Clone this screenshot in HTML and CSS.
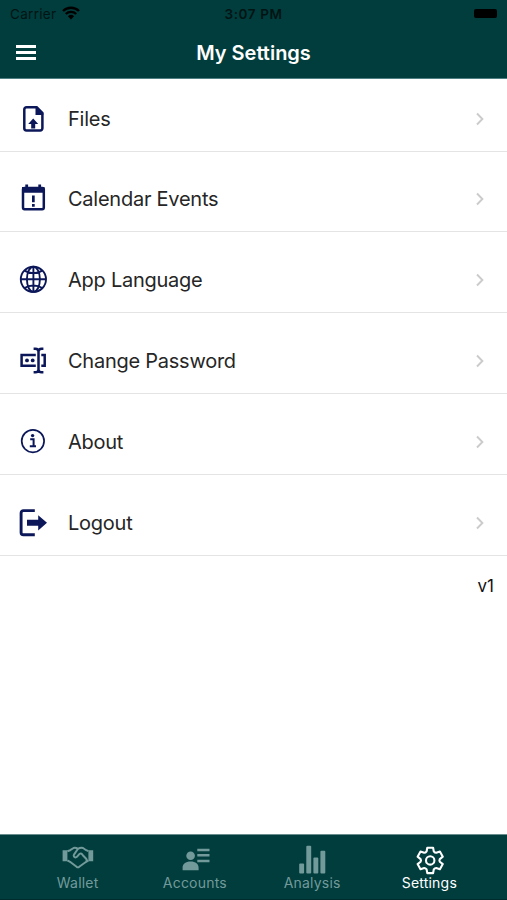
FILE: index.html
```html
<!DOCTYPE html>
<html lang="en">
<head>
    <meta charset="UTF-8">
    <meta name="viewport" content="width=device-width, initial-scale=1.0">
    <title>My Settings</title>
    <link rel="stylesheet" href="styles.css">
</head>
<body>

    <header>
        <!-- Status bar -->
        <div class="status-bar">
            <div class="carrier">
                <span>Carrier</span>
                <svg class="wifi" viewBox="0 0 18 14" width="18" height="14">
                    <path d="M1 5a11.5 11.5 0 0 1 16 0M3.8 8a7.4 7.4 0 0 1 10.4 0" fill="none" stroke="#000" stroke-width="2.4"/>
                    <path d="M5.9 10.2a4.5 4.5 0 0 1 6.2 0L9 13.5z"/>
                </svg>
            </div>
            <div class="time">3:07 PM</div>
            <div class="battery"></div>
        </div>

        <div class="nav-bar">
            <div class="menu-button">
                <span></span>
                <span></span>
                <span></span>
            </div>
            <h1>My Settings</h1>
        </div>
    </header>

    <!-- Settings list -->
    <main>
        <ul class="settings-list">
            <li class="row">
                <svg class="icon" viewBox="0 0 36 36">
                    <path d="M11.5 6.3h10.2l5.7 5.8v15.2a2.2 2.2 0 0 1-2.2 2.2H11.5a2.2 2.2 0 0 1-2.2-2.2V8.5a2.2 2.2 0 0 1 2.2-2.2z" class="line" stroke-width="2.5"/>
                    <path d="M20.5 6h1.8l6 6.2v1.8h-7.8zM18.2 17.6l5 5.4h-3v4.4h-4V23h-3z"/>
                </svg>
                <span class="label">Files</span>
                <svg class="chevron" viewBox="0 0 10 14"><path d="M2 1.5L7.4 7 2 12.5"/></svg>
            </li>
            <li class="row">
                <svg class="icon" viewBox="0 0 36 36">
                    <rect x="8" y="7" width="20.8" height="21.2" rx="1.6" class="line" stroke-width="2.5"/>
                    <path d="M7 6h22.5v5.8H7zM10.3 3.5h2.8V7h-2.8zM23.3 3.5h2.8V7h-2.8zM17 14.5h2.7v6.8H17zM17 23h2.7v2.7H17z"/>
                </svg>
                <span class="label">Calendar Events</span>
                <svg class="chevron" viewBox="0 0 10 14"><path d="M2 1.5L7.4 7 2 12.5"/></svg>
            </li>
            <li class="row">
                <svg class="icon" viewBox="0 0 36 36">
                    <g class="line" stroke-width="1.9">
                        <circle cx="18.4" cy="17.3" r="12.6"/>
                        <ellipse cx="18.4" cy="17.3" rx="6.5" ry="12.6"/>
                        <path d="M18.4 4.6V30M5.7 17.3h25.4M9.6 8.6c4.8 3.4 12.8 3.4 17.6 0M9.6 26c4.8-3.4 12.8-3.4 17.6 0"/>
                    </g>
                </svg>
                <span class="label">App Language</span>
                <svg class="chevron" viewBox="0 0 10 14"><path d="M2 1.5L7.4 7 2 12.5"/></svg>
            </li>
            <li class="row">
                <svg class="icon" viewBox="0 0 36 36">
                    <path d="M20.8 12H6.6v10.8h14.2M26.3 12h3.4v10.8h-3.4M18.6 5.7h1.8c1.8 0 3.1 1 3.1 2.8v18c0 1.8-1.3 2.8-3.1 2.8h-1.8M28.4 5.7h-1.8c-1.8 0-3.1 1-3.1 2.8v18c0 1.8 1.3 2.8 3.1 2.8h1.8" class="line" stroke-width="2.5"/>
                    <circle cx="12" cy="17.4" r="1.9"/>
                    <circle cx="17.7" cy="17.4" r="1.9"/>
                </svg>
                <span class="label">Change Password</span>
                <svg class="chevron" viewBox="0 0 10 14"><path d="M2 1.5L7.4 7 2 12.5"/></svg>
            </li>
            <li class="row">
                <svg class="icon" viewBox="0 0 36 36">
                    <circle cx="17.9" cy="17.1" r="11.2" class="line" stroke-width="1.7"/>
                    <circle cx="17.6" cy="11.6" r="1.7"/>
                    <path d="M15.2 15.2h3.4v6.7M14.8 22.2h6.2" class="line" stroke-width="2"/>
                </svg>
                <span class="label">About</span>
                <svg class="chevron" viewBox="0 0 10 14"><path d="M2 1.5L7.4 7 2 12.5"/></svg>
            </li>
            <li class="row">
                <svg class="icon" viewBox="0 0 36 36">
                    <path d="M19.8 5.6H8.4a2.3 2.3 0 0 0-2.3 2.3v19.6a2.3 2.3 0 0 0 2.3 2.3h11.4" class="line" stroke-width="2.9"/>
                    <path d="M12 14.8h11.2v-4.6L32 17.8l-8.8 7.6v-4.7H12z"/>
                </svg>
                <span class="label">Logout</span>
                <svg class="chevron" viewBox="0 0 10 14"><path d="M2 1.5L7.4 7 2 12.5"/></svg>
            </li>
        </ul>
        <p class="version">v1</p>
    </main>

    <!-- Bottom tabs -->
    <footer>
        <div class="tab">
            <svg viewBox="0 0 36 32">
                <path d="M2.6 6.2h4.8v11H2.6zM28.4 6.2h4.8v11h-4.8z"/>
                <path d="M7.4 7.2l2.8-1 3.4-2.2c1.4-.4 2.8-.1 4.4.8 1.6-.9 3.4-1.2 5-.8l3.2 2.2 2.2 1M7.4 16.4l2.6 1.4 6.6 5c.8.5 1.8.5 2.6 0l7-5 2.2-1.4M18 4.8l-4 5.8c-.8 1.3.2 2.8 1.5 2.8 2.4 0 3-3.8 5.1-3.8 1.2 0 1.5.8 2.2 1.6l3.6 3.8c.5.9.4 1.6-.2 2.4" class="tab-line" stroke-width="2"/>
            </svg>
            <span>Wallet</span>
        </div>
        <div class="tab">
            <svg viewBox="0 0 36 32">
                <circle cx="13.6" cy="11.8" r="4.3"/>
                <path d="M5.6 26.2v-2.4c0-3.8 3-6.2 8-6.2s8 2.4 8 6.2v2.4zM20.3 4.8h12.2v2.5H20.3zM20.3 10.1h12.2v2.5H20.3zM20.3 15.7h12.2v2.5H20.3z"/>
            </svg>
            <span>Accounts</span>
        </div>
        <div class="tab">
            <svg viewBox="0 0 36 32">
                <rect x="5.2" y="19.5" width="4.9" height="10" rx="1"/>
                <rect x="12.3" y="1.8" width="4.9" height="27.7" rx="1"/>
                <rect x="19.4" y="13.6" width="4.9" height="15.9" rx="1"/>
                <rect x="26.4" y="6.8" width="4.9" height="22.7" rx="1"/>
            </svg>
            <span>Analysis</span>
        </div>
        <div class="tab active">
            <svg viewBox="0 0 36 32">
                <g transform="translate(19.2 16.4)" class="tab-line" stroke-width="2.1">
                    <path d="M-3.6-9l.7-3.7h5.8l.7 3.7Q4.6-7.6 6-7.6l3.7-1.2 2.9 5.1-3 2.35Q8.8 0 9.6 1.35l3 2.35-2.9 5.1L6 7.6Q4.6 7.6 3.6 9l-.7 3.7h-5.8L-3.6 9Q-4.6 7.6-6 7.6l-3.7 1.2-2.9-5.1 3-2.35Q-8.8 0-9.6-1.35l-3-2.35 2.9-5.1L-6-7.6Q-4.6-7.6-3.6-9z"/>
                    <circle r="4.2"/>
                </g>
            </svg>
            <span>Settings</span>
        </div>
    </footer>

</body>
</html>
```
FILE: styles.css
```css
* {
    box-sizing: border-box;
}

body {
    display: flex;
    flex-direction: column;
    height: 900px;
    margin: 0;
    background-color: #ffffff;
    color: #262626;
    font-family: Inter, Roboto, sans-serif;
    overflow: hidden;
}

header {
    height: 79px;
    background-color: #003d3c;
    border-bottom: 1px solid #4e7f83;
}

.status-bar {
    display: grid;
    grid-template-columns: 1fr auto 1fr;
    align-items: center;
    height: 27px;
    padding: 0 10px;
    color: #001414;
    font-size: 13.5px;
}

.carrier {
    display: flex;
    align-items: center;
    gap: 6px;
    letter-spacing: 0.3px;
}

.wifi {
    margin-top: -2px;
}

.time {
    font-weight: 600;
    letter-spacing: 0.6px;
}

.battery {
    justify-self: end;
    width: 23px;
    height: 9px;
    border-radius: 2px;
    background-color: #000000;
}

.nav-bar {
    display: grid;
    grid-template-columns: 1fr auto 1fr;
    align-items: center;
    height: 51px;
    padding: 0 16px;
}

.menu-button {
    display: flex;
    flex-direction: column;
    gap: 3px;
    width: 20px;
}

.menu-button span {
    height: 3.3px;
    background-color: #ffffff;
}

h1 {
    margin: 0;
    color: #ffffff;
    font-size: 20px;
    font-weight: 600;
}

main {
    flex: 1;
}

.settings-list {
    margin: 0;
    padding: 0;
    list-style: none;
}

.row {
    display: flex;
    align-items: flex-end;
    height: 80.8px;
    padding: 0 22px 14px 15px;
    border-bottom: 1px solid #e4e4e4;
}

.row:first-child {
    height: 72.6px;
}

.icon {
    width: 36px;
    height: 36px;
    fill: #0b1758;
}

.line {
    fill: none;
    stroke: #0b1758;
}

.label {
    flex: 1;
    margin-left: 17px;
    font-size: 20px;
    letter-spacing: -0.25px;
    line-height: 36px;
}

.chevron {
    width: 10px;
    height: 14px;
    margin-bottom: 11px;
    fill: none;
    stroke: #cbcbcb;
    stroke-width: 1.9;
}

.version {
    margin: 20px 13px 0;
    color: #111111;
    font-size: 17px;
    text-align: right;
}

footer {
    display: grid;
    grid-template-columns: repeat(4, 1fr);
    height: 66px;
    padding: 9px 19px 0;
    background-color: #003d3c;
    border-top: 1px solid #6b8c8c;
    border-bottom: 1px solid #012c2e;
}

.tab {
    display: flex;
    flex-direction: column;
    align-items: center;
    color: #739a9b;
    font-size: 14px;
    letter-spacing: 0.2px;
    line-height: 17px;
}

.tab svg {
    width: 36px;
    height: 32px;
    margin-bottom: -2px;
    fill: currentColor;
}

.tab .tab-line {
    fill: none;
    stroke: currentColor;
    stroke-linejoin: round;
}

.tab.active {
    color: #ffffff;
}
```
